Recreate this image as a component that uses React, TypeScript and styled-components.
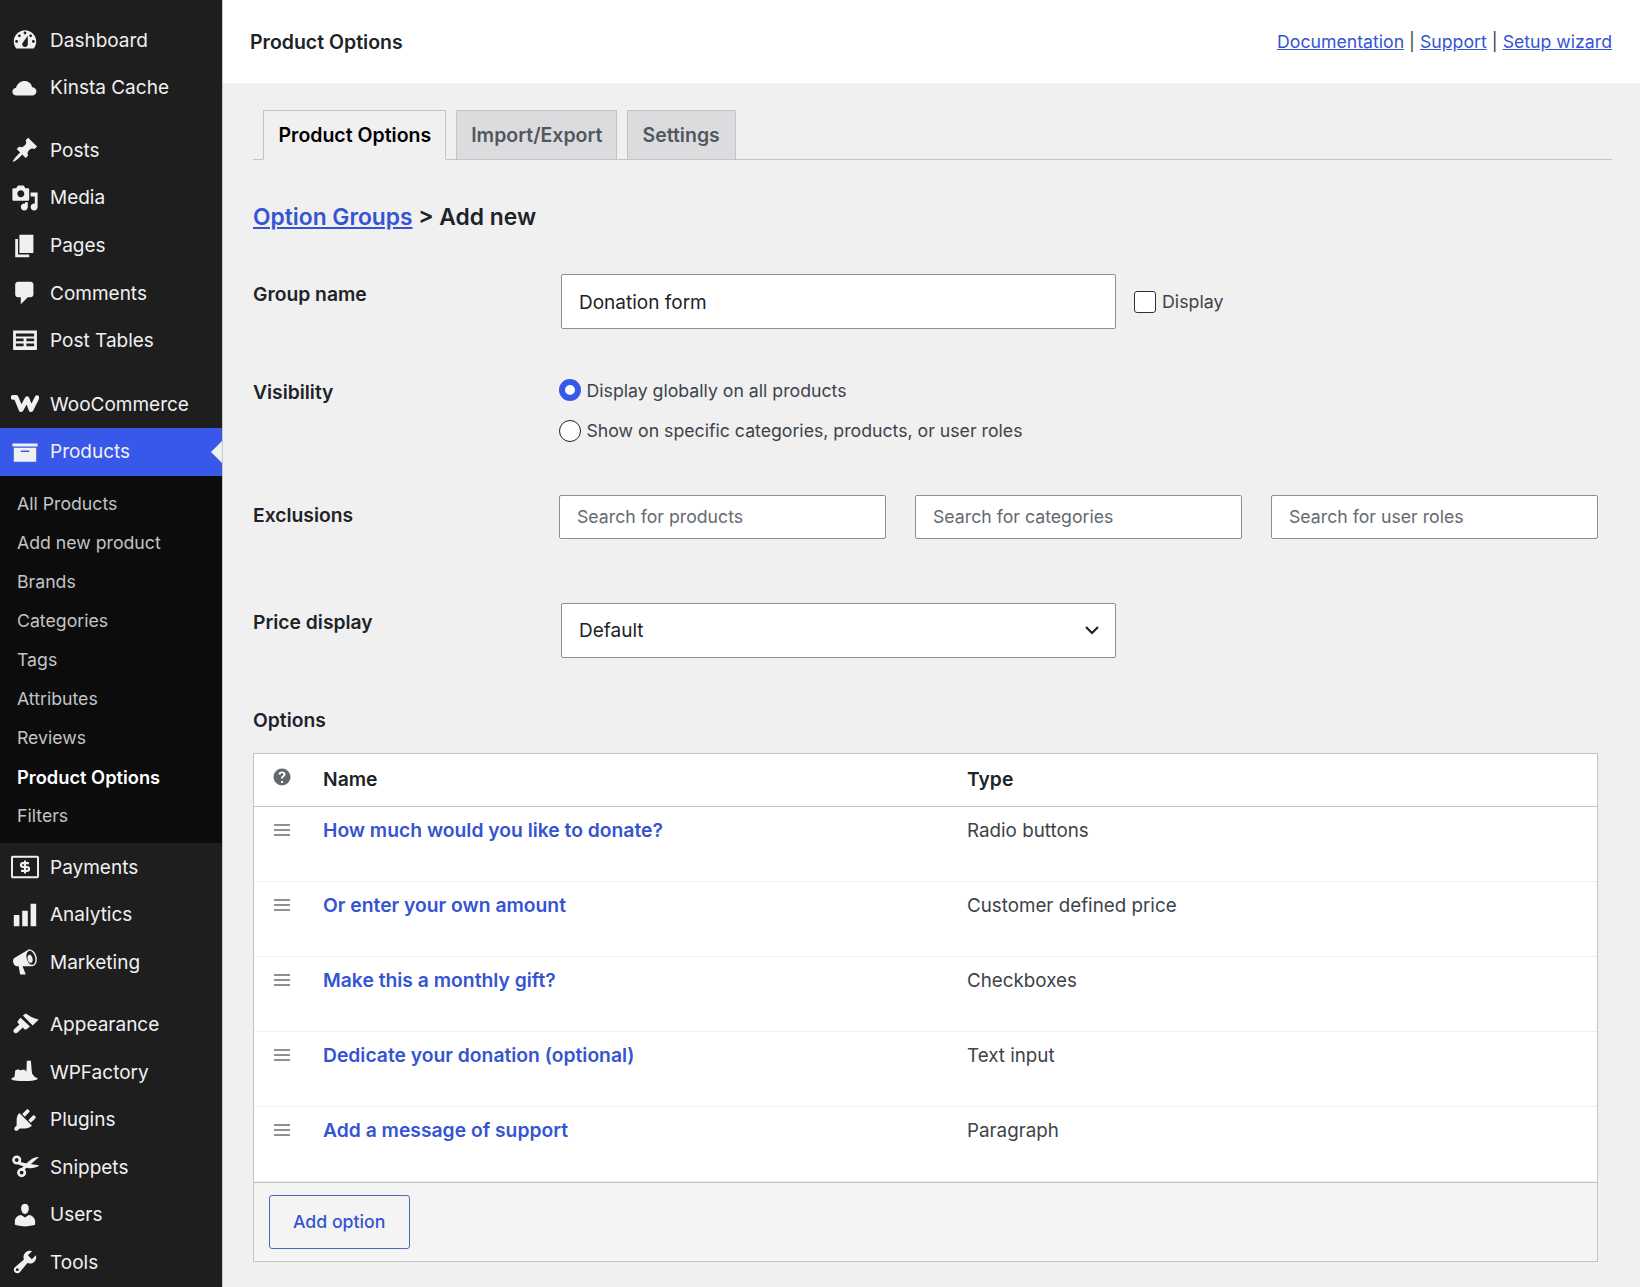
import React from 'react';
import styled, { createGlobalStyle } from 'styled-components';

const GlobalStyle = createGlobalStyle`
  html, body {
    margin: 0;
    padding: 0;
    background: #f0f0f1;
  }
  body {
    font-family: 'Inter', 'Liberation Sans', sans-serif;
    color: #1d2327;
    -webkit-font-smoothing: antialiased;
  }
  * {
    box-sizing: border-box;
  }
`;

const linkBlue = '#3554d1';

const Page = styled.div`
  display: flex;
  width: 1640px;
  height: 1287px;
  overflow: hidden;
`;

const Sidebar = styled.nav`
  flex: 0 0 223px;
  height: 100%;
  padding-top: 16.4px;
  background: #1e1e1e;
  border-right: 1px solid #c9c9c9;
  overflow: hidden;
`;

const NavGroup = styled.div<{ $gap: number }>`
  margin-bottom: ${(p) => p.$gap}px;
`;

const NavRow = styled.a<{ $active?: boolean }>`
  position: relative;
  display: flex;
  align-items: center;
  height: 47.6px;
  padding-left: 11px;
  font-size: 19px;
  color: #f0f0f1;
  text-decoration: none;
  background: ${(p) => (p.$active ? '#3858e9' : 'transparent')};

  ${(p) =>
    p.$active &&
    `
    &::after {
      content: '';
      position: absolute;
      right: 0;
      top: 50%;
      margin-top: -11px;
      border: 11px solid transparent;
      border-right-color: #f0f0f1;
      border-left-width: 0;
    }
  `}
`;

const NavIcon = styled.svg`
  flex: 0 0 28px;
  width: 28px;
  height: 28px;
  margin-right: 11px;
  fill: #f0f0f1;
`;

const SubNav = styled.div`
  padding: 8px 0 8.1px;
  background: #0c0c0c;
`;

const SubRow = styled.a<{ $current?: boolean }>`
  display: flex;
  align-items: center;
  height: 39.1px;
  padding-left: 17px;
  font-size: ${(p) => (p.$current ? 18.3 : 17.7)}px;
  font-weight: ${(p) => (p.$current ? 600 : 400)};
  color: ${(p) => (p.$current ? '#ffffff' : '#c3c4c7')};
  text-decoration: none;
`;

const Main = styled.main`
  flex: 1;
  min-width: 0;
`;

const TopBar = styled.header`
  display: flex;
  align-items: center;
  justify-content: space-between;
  height: 83px;
  padding: 0 28px 0 27px;
  background: #ffffff;
`;

const TopTitle = styled.div`
  font-size: 19.5px;
  font-weight: 600;
  color: #1d2327;
`;

const TopLinks = styled.div`
  font-size: 17.7px;
  color: #3c434a;
`;

const Link = styled.a`
  color: ${linkBlue};
  text-decoration: underline;
`;

const Content = styled.div`
  padding: 27px 42px 0 30px;
`;

const Tabs = styled.div`
  display: flex;
  gap: 10px;
  height: 50px;
  padding-left: 10px;
  border-bottom: 1px solid #c3c4c7;
  margin-right: -14px;
`;

const Tab = styled.div<{ $active?: boolean }>`
  display: flex;
  align-items: center;
  height: 50px;
  padding: 0 13.5px 0 14.5px;
  font-size: 19.5px;
  font-weight: 600;
  color: ${(p) => (p.$active ? '#000000' : '#50575e')};
  background: ${(p) => (p.$active ? '#f0f0f1' : '#dcdcde')};
  border: 1px solid #c3c4c7;
  border-bottom-color: ${(p) => (p.$active ? '#f0f0f1' : '#c3c4c7')};

  &:last-child {
    padding-right: 15.5px;
  }
`;

const Heading = styled.h1`
  margin: 40px 0 0;
  font-size: 22.8px;
  line-height: 34px;
  font-weight: 600;
  color: #1d2327;

  a {
    color: ${linkBlue};
  }
`;

const FormRow = styled.div<{ $top: number; $height: number }>`
  display: grid;
  grid-template-columns: 307px 1fr;
  margin-top: ${(p) => p.$top}px;
  min-height: ${(p) => p.$height}px;
`;

const Label = styled.label<{ $pad: number }>`
  padding-top: ${(p) => p.$pad}px;
  font-size: 19.3px;
  line-height: 24px;
  font-weight: 600;
  color: #1d2327;
`;

const InlineField = styled.div`
  display: flex;
  align-items: center;
`;

const TextInput = styled.input`
  width: 555px;
  height: 55px;
  margin-left: 1px;
  padding: 2px 17px 0;
  font: 400 19px 'Inter', sans-serif;
  color: #1d2327;
  background: #ffffff;
  border: 1.4px solid #8c8f94;
  border-radius: 2px;
  outline: none;
`;

const CheckLabel = styled.label`
  display: flex;
  align-items: center;
  gap: 6px;
  margin-left: 18px;
  font-size: 17.8px;
  color: #3c434a;
`;

const Checkbox = styled.input`
  appearance: none;
  width: 22px;
  height: 22px;
  margin: 0;
  background: #ffffff;
  border: 1.4px solid #2c3338;
  border-radius: 3px;
`;

const RadioList = styled.div`
  display: flex;
  flex-direction: column;
  gap: 18.5px;
  margin-left: -1.5px;
  padding-top: 1px;
`;

const RadioLabel = styled.label`
  display: flex;
  align-items: center;
  gap: 6px;
  height: 22px;
  font-size: 17.7px;
  color: #3c434a;
`;

const Radio = styled.input`
  appearance: none;
  width: 22px;
  height: 22px;
  margin: 0;
  background: #ffffff;
  border: 1.4px solid #1d2327;
  border-radius: 50%;

  &:checked {
    border: 6px solid #3858e9;
  }
`;

const SearchRow = styled.div`
  display: flex;
  gap: 29px;
  margin-left: -1px;
`;

const SearchInput = styled.input`
  width: 327px;
  height: 44px;
  padding: 0 17px;
  font: 400 17.7px 'Inter', sans-serif;
  background: #ffffff;
  border: 1.4px solid #8c8f94;
  border-radius: 2px;
  outline: none;

  &::placeholder {
    color: #646970;
    opacity: 1;
  }
`;

const SelectBox = styled.div`
  display: flex;
  align-items: center;
  justify-content: space-between;
  width: 555px;
  height: 55px;
  margin-left: 1px;
  padding: 0 13px 0 17px;
  font-size: 19px;
  color: #1d2327;
  background: #ffffff;
  border: 1.4px solid #8c8f94;
  border-radius: 2px;
`;

const SectionTitle = styled.h2`
  margin: 50px 0 0;
  font-size: 19.3px;
  line-height: 24px;
  font-weight: 600;
  color: #1d2327;
`;

const OptionsTable = styled.div`
  margin-top: 21.5px;
  background: #ffffff;
  border: 1.4px solid #c3c4c7;
`;

const TableRow = styled.div<{ $header?: boolean }>`
  display: grid;
  grid-template-columns: 69px 644px 1fr;
  height: ${(p) => (p.$header ? 53 : 75)}px;
  padding-top: ${(p) => (p.$header ? 13 : 11)}px;
  font-size: 19.3px;
  line-height: 24px;
  border-bottom: ${(p) => (p.$header ? '1.4px solid #c3c4c7' : '1.4px solid #f0f0f1')};
  font-weight: ${(p) => (p.$header ? 600 : 400)};
`;

const HandleCell = styled.div`
  display: flex;
  justify-content: center;
  padding-top: 3px;
  padding-right: 13px;
`;

const NameLink = styled.a`
  font-weight: 600;
  color: ${linkBlue};
  text-decoration: none;
`;

const TypeCell = styled.div`
  padding-top: 1px;
  font-size: 18.8px;
  color: #3c434a;
`;

const TableFooter = styled.div`
  height: 79px;
  padding: 11.6px 14.6px;
  background: #f4f4f5;
  border-top: 1.4px solid #c3c4c7;
`;

const AddButton = styled.button`
  width: 141px;
  height: 54px;
  font: 500 17.7px 'Inter', sans-serif;
  color: ${linkBlue};
  background: transparent;
  border: 1.4px solid #4f69bd;
  border-radius: 3px;
`;

const HelpIcon = styled.svg`
  width: 20px;
  height: 20px;
  margin-top: -3px;
  fill: #646970;
`;

const DragIcon = styled.svg`
  width: 18px;
  height: 18px;
  fill: #8c8f94;
`;

const icons: Record<string, React.ReactNode> = {
  dashboard: (
    <path
      fillRule="evenodd"
      d="M3.76 16h12.48c1.1-1.37 1.76-3.11 1.76-5 0-4.42-3.58-8-8-8s-8 3.58-8 8c0 1.89.66 3.63 1.76 5zM10 4c.55 0 1 .45 1 1s-.45 1-1 1-1-.45-1-1 .45-1 1-1zM6 6c.55 0 1 .45 1 1s-.45 1-1 1-1-.45-1-1 .45-1 1-1zm8 0c.55 0 1 .45 1 1s-.45 1-1 1-1-.45-1-1 .45-1 1-1zm-5.37 5.55L12 7v6c0 1.1-.9 2-2 2s-2-.9-2-2c0-.57.24-1.08.63-1.45zM4 10c.55 0 1 .45 1 1s-.45 1-1 1-1-.45-1-1 .45-1 1-1zm12 0c.55 0 1 .45 1 1s-.45 1-1 1-1-.45-1-1 .45-1 1-1z"
    />
  ),
  cloud: <path d="M15 9.2c1.5.2 3.2 1.3 3.2 3.2 0 1.8-1.4 3-3 3H3.8C2.2 15.4 1 14.2 1 12.6c0-1.5 1.1-2.7 2.6-2.8C4.4 6.8 7 5 9.7 5c2.7 0 4.9 1.8 5.3 4.2z" />,
  pin: <path d="M10.44 3.02l1.82-1.82 6.36 6.35-1.83 1.82c-1.05-.68-2.48-.57-3.41.36l-.75.75c-.92.93-1.04 2.35-.35 3.41l-1.83 1.82-2.41-2.41-2.8 2.79c-.42.42-3.38 2.71-3.8 2.29s1.86-3.39 2.28-3.81l2.79-2.79L4.1 9.36l1.83-1.82c1.05.69 2.48.57 3.4-.36l.75-.75c.93-.92 1.05-2.35.36-3.41z" />,
  media: (
    <path
      fillRule="evenodd"
      d="M13 11V4c0-.55-.45-1-1-1h-1.67L9 1H5L3.67 3H2c-.55 0-1 .45-1 1v7c0 .55.45 1 1 1h10c.55 0 1-.45 1-1zM7 4.5c1.38 0 2.5 1.12 2.5 2.5S8.38 9.5 7 9.5 4.5 8.38 4.5 7 5.62 4.5 7 4.5zM14 6h5v10.5c0 1.38-1.12 2.5-2.5 2.5S14 17.88 14 16.5s1.12-2.5 2.5-2.5c.17 0 .34.02.5.05V9h-3V6zm-4 8.05V13h2v3.5c0 1.38-1.12 2.5-2.5 2.5S7 17.88 7 16.5 8.12 14 9.5 14c.17 0 .34.02.5.05z"
    />
  ),
  pages: <path d="M6 15V2h10v13H6zm-1 1h8v2H3V5h2v11z" />,
  comments: <path d="M5 2h9c1.1 0 2 .9 2 2v7c0 1.1-.9 2-2 2h-2l-5 5v-5H5c-1.1 0-2-.9-2-2V4c0-1.1.9-2 2-2z" />,
  table: (
    <path
      fillRule="evenodd"
      d="M1.500 2.500H18.500V16.500H1.500zM3.500 4.700h13v2h-13zM3.500 8.200H9v2H3.500zM11 8.200h5.500v2H11zM3.500 11.700H9v2H3.500zM11 11.700h5.500v2H11z"
    />
  ),
  archive: <path fillRule="evenodd" d="M19 4v2H1V4h18zM2 7h16v10H2V7zm11 3V9H7v1h6z" />,
  chart: <path d="M18 18V2h-4v16h4zm-6 0V7H8v11h4zm-6 0v-8H2v8h4z" />,
  megaphone: (
    <path
      fillRule="evenodd"
      d="M18.15 5.94c.46 1.62.38 3.22-.02 4.48-.42 1.28-1.26 2.18-2.3 2.48-.16.06-.26.06-.4.06-.06.02-.12.02-.18.02-.06.02-.14.02-.22.02h-6.8l2.22 5.5c.02.14-.06.26-.14.34-.08.1-.24.16-.34.16H6.95c-.1 0-.26-.06-.34-.16-.08-.08-.16-.2-.14-.34l-1-5.5H4.25l-.02-.02c-.5.06-1.08-.18-1.54-.62s-.88-1.08-1.06-1.88c-.24-.8-.2-1.56-.02-2.2.18-.62.58-1.08 1.06-1.3l.02-.02 9-5.4c.1-.06.18-.1.24-.16.06-.04.14-.08.24-.12.16-.08.28-.12.5-.18 1.04-.3 2.24.1 3.22 1 .98.88 1.8 2.24 2.26 3.86zm-2.58 5.98h-.02c.4-.1.74-.34 1.04-.7.58-.7.86-1.76.86-3.04 0-.64-.1-1.3-.28-1.98-.34-1.36-1.02-2.5-1.78-3.24s-1.68-1.1-2.46-.88c-.82.22-1.4.96-1.7 2-.32 1.04-.28 2.36.06 3.72.38 1.36 1 2.5 1.8 3.24.78.74 1.62 1.1 2.48.88zm-2.54-7.08c.22-.04.42-.02.62.04.38.16.76.48 1.1 1s.58 1.14.68 1.84c.18 1.1.06 2-.4 2.42-.24.22-.6.38-1 .38-.38 0-.78-.16-1.12-.42-.36-.28-.64-.66-.84-1.14-.3-.8-.4-1.800-.2-2.700.2-.9.800-1.600 1.900-1.640z"
    />
  ),
  brush: (
    <>
      <path d="M8.500 4L10.500 2.500C13 4 15.500 6 19.800 6.800L15.500 11z" />
      <path d="M6.800 5.500L13.600 11.800l-2.200 1.800c-.6.5-1.400.4-2-.1l-1-1-3.700 3.500c-.8.7-1.900.7-2.500 0-.6-.7-.6-1.700 0-2.300L6 10.400l-.9-.9c-.6-.6-.6-1.400 0-2z" />
    </>
  ),
  factory: <path d="M3 9l2-1 1.500.7 3-.5 1.500 1.500L11.300 2h2.900l.8 9 2 2.500c1.200.4 2 .8 2 1.300 0 1-4.500 1.700-9.500 1.700S.2 15.800.2 15c0-.5.8-1 2.300-1.500z" />,
  plug: <path d="M13.11 4.36L9.87 7.6 8 5.73l3.24-3.24c.35-.34 1.05-.2 1.56.32.52.51.66 1.21.31 1.55zm-8 1.77l.91-1.12 9.01 9.01-1.19.84c-.71.71-2.63 1.16-3.82 1.16H6.14L4.9 17.26c-.59.59-1.54.59-2.12 0-.59-.58-.59-1.53 0-2.12l1.24-1.24v-3.88c0-1.13.4-3.19 1.09-3.89zm7.26 3.97l3.24-3.24c.34-.35 1.04-.21 1.55.31.52.51.66 1.21.31 1.55l-3.24 3.25z" />,
  scissors: (
    <>
      <circle cx="4.100" cy="5" r="2.300" fill="none" stroke="#f0f0f1" strokeWidth="1.900" />
      <circle cx="7.600" cy="14" r="2.300" fill="none" stroke="#f0f0f1" strokeWidth="1.900" />
      <path d="M9.300 12.200L7.300 11l5.200-5C14.500 4.200 17.500 2.600 20 2.800z" />
      <path d="M5.200 6L12 7.700l8.200 1.100c-2 1.900-5.700 2.400-8.200 1.900L5.200 8.200z" />
    </>
  ),
  users: <path d="M10 9.25c-2.270 0-2.730-3.440-2.730-3.440C7 4.020 7.820 2 9.970 2c2.160 0 2.980 2.020 2.710 3.810 0 0-.41 3.440-2.680 3.440zm0 2.570L12.720 10c2.390 0 4.520 2.330 4.520 4.530v2.490s-3.650 1.130-7.240 1.130c-3.650 0-7.240-1.130-7.240-1.130v-2.490c0-2.250 1.940-4.480 4.470-4.480z" />,
  wrench: (
    <path
      fillRule="evenodd"
      d="M16.680 9.770c-1.340 1.340-3.300 1.670-4.950.99l-5.410 6.520c-.99.99-2.590.99-3.580 0s-.99-2.590 0-3.570l6.520-5.420c-.68-1.650-.35-3.610.99-4.950 1.280-1.280 3.120-1.620 4.720-1.060l-2.890 2.890 2.820 2.820 2.860-2.870c.53 1.580.18 3.390-1.080 4.670zM3.810 16.210c.4.39 1.040.39 1.430 0 .4-.4.4-1.040 0-1.430-.39-.4-1.030-.4-1.430 0-.39.39-.39 1.030 0 1.430z"
    />
  ),
  woo: <path d="M1.500 5.300H3.600L7.200 14 11.500 6.300 14.300 14 18.600 5.500" fill="none" stroke="#f0f0f1" strokeWidth="3.400" strokeLinejoin="round" strokeLinecap="round" />,
  money: (
    <>
      <rect x=".7" y="2.700" width="18.600" height="14.600" rx=".6" fill="none" stroke="#f0f0f1" strokeWidth="1.400" />
      <path d="M12.800 7.200H8.600c-1 0-1.500.7-1.500 1.400s.5 1.400 1.500 1.400h2.800c1 0 1.500.7 1.500 1.400s-.5 1.400-1.500 1.400H7.200M10 5.400v9.200" fill="none" stroke="#f0f0f1" strokeWidth="1.500" />
    </>
  ),
};

const Icon = ({ name }: { name: string }) => <NavIcon viewBox="0 0 20 20">{icons[name]}</NavIcon>;

const NavItem = ({ icon, label, active }: { icon: string; label: string; active?: boolean }) => (
  <NavRow href="#" $active={active}>
    <Icon name={icon} />
    {label}
  </NavRow>
);

const subItems = ['All Products', 'Add new product', 'Brands', 'Categories', 'Tags', 'Attributes', 'Reviews', 'Product Options', 'Filters'];

const options = [
  { name: 'How much would you like to donate?', type: 'Radio buttons' },
  { name: 'Or enter your own amount', type: 'Customer defined price' },
  { name: 'Make this a monthly gift?', type: 'Checkboxes' },
  { name: 'Dedicate your donation (optional)', type: 'Text input' },
  { name: 'Add a message of support', type: 'Paragraph' },
];

const App: React.FC = () => {
  return (
    <Page>
      <GlobalStyle />
      <Sidebar>
        <NavGroup $gap={15}>
          <NavItem icon="dashboard" label="Dashboard" />
          <NavItem icon="cloud" label="Kinsta Cache" />
        </NavGroup>
        <NavGroup $gap={15.8}>
          <NavItem icon="pin" label="Posts" />
          <NavItem icon="media" label="Media" />
          <NavItem icon="pages" label="Pages" />
          <NavItem icon="comments" label="Comments" />
          <NavItem icon="table" label="Post Tables" />
        </NavGroup>
        <NavItem icon="woo" label="WooCommerce" />
        <NavItem icon="archive" label="Products" active />
        <SubNav>
          {subItems.map((item) => (
            <SubRow href="#" key={item} $current={item === 'Product Options'}>
              {item}
            </SubRow>
          ))}
        </SubNav>
        <NavGroup $gap={14.4}>
          <NavItem icon="money" label="Payments" />
          <NavItem icon="chart" label="Analytics" />
          <NavItem icon="megaphone" label="Marketing" />
        </NavGroup>
        <NavItem icon="brush" label="Appearance" />
        <NavItem icon="factory" label="WPFactory" />
        <NavItem icon="plug" label="Plugins" />
        <NavItem icon="scissors" label="Snippets" />
        <NavItem icon="users" label="Users" />
        <NavItem icon="wrench" label="Tools" />
      </Sidebar>
      <Main>
        <TopBar>
          <TopTitle>Product Options</TopTitle>
          <TopLinks>
            <Link href="#">Documentation</Link> | <Link href="#">Support</Link> | <Link href="#">Setup wizard</Link>
          </TopLinks>
        </TopBar>
        <Content>
          <Tabs>
            <Tab $active>Product Options</Tab>
            <Tab>Import/Export</Tab>
            <Tab>Settings</Tab>
          </Tabs>
          <Heading>
            <a href="#">Option Groups</a> &gt; Add new
          </Heading>
          <FormRow $top={40} $height={55}>
            <Label $pad={8}>Group name</Label>
            <InlineField>
              <TextInput defaultValue="Donation form" />
              <CheckLabel>
                <Checkbox type="checkbox" />
                Display
              </CheckLabel>
            </InlineField>
          </FormRow>
          <FormRow $top={49} $height={62}>
            <Label $pad={2}>Visibility</Label>
            <RadioList>
              <RadioLabel>
                <Radio type="radio" name="visibility" defaultChecked />
                Display globally on all products
              </RadioLabel>
              <RadioLabel>
                <Radio type="radio" name="visibility" />
                Show on specific categories, products, or user roles
              </RadioLabel>
            </RadioList>
          </FormRow>
          <FormRow $top={53} $height={44}>
            <Label $pad={8}>Exclusions</Label>
            <SearchRow>
              <SearchInput placeholder="Search for products" />
              <SearchInput placeholder="Search for categories" />
              <SearchInput placeholder="Search for user roles" />
            </SearchRow>
          </FormRow>
          <FormRow $top={64} $height={55}>
            <Label $pad={7}>Price display</Label>
            <SelectBox>
              Default
              <svg width="20" height="20" viewBox="0 0 20 20" fill="none" stroke="#1d2327" strokeWidth="2.2">
                <path d="M4 7l6 6 6-6" />
              </svg>
            </SelectBox>
          </FormRow>
          <SectionTitle>Options</SectionTitle>
          <OptionsTable>
            <TableRow $header>
              <HandleCell>
                <HelpIcon viewBox="0 0 20 20">
                  <path
                    fillRule="evenodd"
                    d="M10 1.500a8.500 8.500 0 1 1 0 17 8.500 8.500 0 0 1 0-17zM9 14v2h2v-2H9zm1-9.500c-2 0-3.400 1.100-3.500 3h2c.1-.8.700-1.200 1.500-1.200s1.400.4 1.400 1.100c0 .6-.4 1-1.100 1.500-1 .7-1.300 1.300-1.300 2.600h1.900c0-.7.200-1.100.9-1.600 1-.7 1.700-1.300 1.700-2.600 0-1.700-1.500-2.800-3.500-2.800z"
                  />
                </HelpIcon>
              </HandleCell>
              <div>Name</div>
              <div>Type</div>
            </TableRow>
            {options.map((option) => (
              <TableRow key={option.name}>
                <HandleCell>
                  <DragIcon viewBox="0 0 18 18">
                    <path d="M1 3h16v2H1zM1 8h16v2H1zM1 13h16v2H1z" />
                  </DragIcon>
                </HandleCell>
                <div>
                  <NameLink href="#">{option.name}</NameLink>
                </div>
                <TypeCell>{option.type}</TypeCell>
              </TableRow>
            ))}
            <TableFooter>
              <AddButton>Add option</AddButton>
            </TableFooter>
          </OptionsTable>
        </Content>
      </Main>
    </Page>
  );
};

export default App;
